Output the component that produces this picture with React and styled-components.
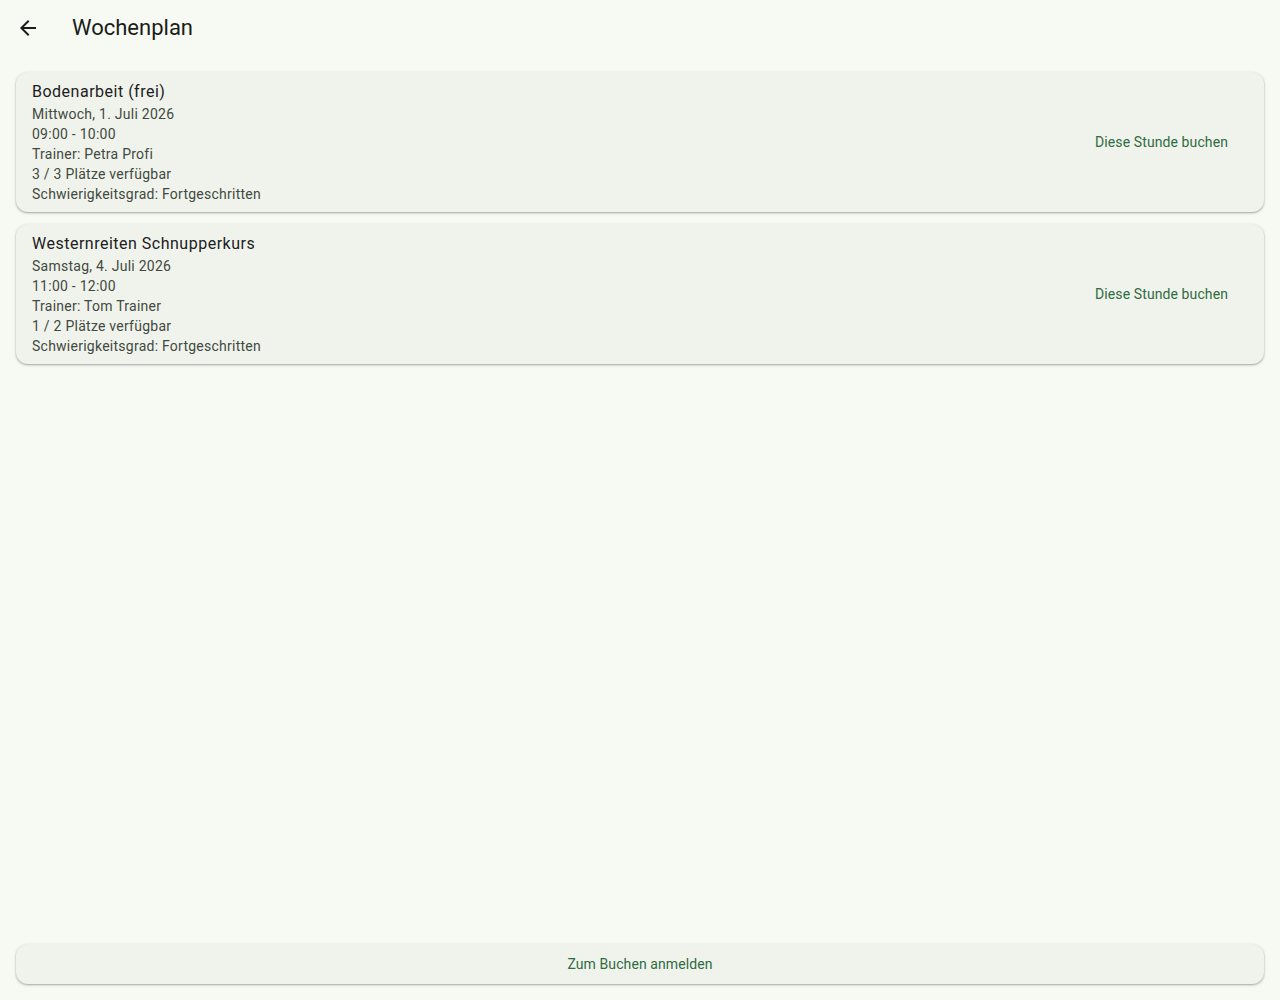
import React from 'react';
import styled, { createGlobalStyle } from 'styled-components';

const GlobalStyle = createGlobalStyle`
  html, body {
    margin: 0;
    padding: 0;
    background: #f6faf3;
  }
  body {
    font-family: Roboto, "Noto Sans", "Liberation Sans", sans-serif;
    color: #1a1c19;
  }
`;

const Page = styled.div`
  display: flex;
  flex-direction: column;
  min-height: 100vh;
  background: #f6faf3;
`;

const AppBar = styled.header`
  display: flex;
  align-items: center;
  height: 56px;
`;

const BackButton = styled.button`
  display: flex;
  align-items: center;
  justify-content: center;
  width: 56px;
  height: 56px;
  padding: 0;
  border: none;
  background: transparent;
  color: #1a1c19;
  cursor: pointer;
`;

const Title = styled.h1`
  margin: 0 0 0 16px;
  font-size: 22px;
  font-weight: 400;
  line-height: 28px;
  color: #1a1c19;
`;

const List = styled.main`
  flex: 1;
  display: flex;
  flex-direction: column;
  gap: 12px;
  padding: 16px 16px 0;
`;

const Card = styled.article`
  display: flex;
  align-items: center;
  justify-content: space-between;
  padding: 7px 24px 8px 16px;
  background: #eff3ec;
  border-radius: 12px;
  box-shadow: 0 1px 2px rgba(0, 0, 0, 0.28), 0 1px 3px 1px rgba(0, 0, 0, 0.06);
`;

const Info = styled.div`
  display: flex;
  flex-direction: column;
`;

const LessonName = styled.div`
  font-size: 16px;
  line-height: 25px;
  letter-spacing: 0.5px;
  color: #1d201c;
`;

const Detail = styled.div`
  font-size: 14px;
  line-height: 20px;
  letter-spacing: 0.25px;
  color: #42493f;
`;

const TextButton = styled.button`
  padding: 10px 12px;
  border: none;
  background: transparent;
  font-family: inherit;
  font-size: 14px;
  font-weight: 400;
  letter-spacing: 0.1px;
  color: #2f6b3f;
  cursor: pointer;
`;

const Footer = styled.footer`
  padding: 16px;
`;

const WideButton = styled.button`
  display: block;
  width: 100%;
  height: 40px;
  border: none;
  border-radius: 12px;
  background: #eff3ec;
  box-shadow: 0 1px 2px rgba(0, 0, 0, 0.28), 0 1px 3px 1px rgba(0, 0, 0, 0.06);
  font-family: inherit;
  font-size: 14px;
  font-weight: 400;
  letter-spacing: 0.1px;
  color: #2f6b3f;
  cursor: pointer;
`;

const lessons = [
  {
    name: 'Bodenarbeit (frei)',
    date: 'Mittwoch, 1. Juli 2026',
    time: '09:00 - 10:00',
    trainer: 'Petra Profi',
    free: 3,
    total: 3,
    level: 'Fortgeschritten',
  },
  {
    name: 'Westernreiten Schnupperkurs',
    date: 'Samstag, 4. Juli 2026',
    time: '11:00 - 12:00',
    trainer: 'Tom Trainer',
    free: 1,
    total: 2,
    level: 'Fortgeschritten',
  },
];

const ArrowBack = () => (
  <svg width="24" height="24" viewBox="0 0 24 24" fill="currentColor">
    <path d="M20 11H7.83l5.59-5.59L12 4l-8 8 8 8 1.41-1.41L7.83 13H20v-2z" />
  </svg>
);

const App = () => {
  return (
    <Page>
      <GlobalStyle />
      <AppBar>
        <BackButton aria-label="Zurück">
          <ArrowBack />
        </BackButton>
        <Title>Wochenplan</Title>
      </AppBar>
      <List>
        {lessons.map((l) => (
          <Card key={l.name}>
            <Info>
              <LessonName>{l.name}</LessonName>
              <Detail>{l.date}</Detail>
              <Detail>{l.time}</Detail>
              <Detail>Trainer: {l.trainer}</Detail>
              <Detail>
                {l.free} / {l.total} Plätze verfügbar
              </Detail>
              <Detail>Schwierigkeitsgrad: {l.level}</Detail>
            </Info>
            <TextButton>Diese Stunde buchen</TextButton>
          </Card>
        ))}
      </List>
      <Footer>
        <WideButton>Zum Buchen anmelden</WideButton>
      </Footer>
    </Page>
  );
};

export default App;
